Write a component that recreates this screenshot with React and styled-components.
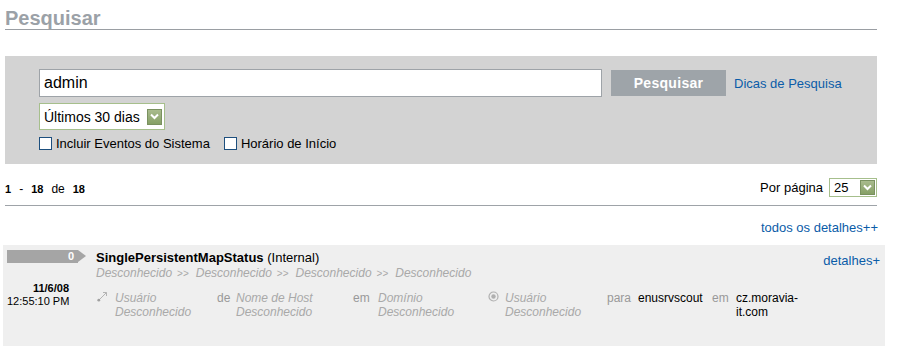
import React from "react";
import styled, { createGlobalStyle } from "styled-components";

const Global = createGlobalStyle`
  html, body { margin: 0; padding: 0; background: #fff; }
  body { font-family: "Liberation Sans", Arial, sans-serif; color: #000; }
  * { box-sizing: border-box; }
`;

const Page = styled.div`
  width: 897px;
  padding-left: 3px;
  padding-top: 8px;
`;

const Section = styled.div`
  width: 872px;
  margin-left: 2px;
`;

const Title = styled.h1`
  margin: 0;
  font-size: 20px;
  line-height: 20px;
  font-weight: bold;
  color: #9ba1a7;
  padding-bottom: 1px;
  border-bottom: 1px solid #9a9ea3;
`;

const Panel = styled.div`
  margin-top: 26px;
  background: #d3d3d3;
  padding: 13px 0 14px 34px;
  display: flex;
  flex-direction: column;
`;

const SearchRow = styled.div`
  display: flex;
  align-items: center;
`;

const SearchInput = styled.input`
  width: 563px;
  height: 28px;
  border: 1px solid #9ea3a8;
  background: #fff;
  padding: 0 4px;
  font-family: inherit;
  font-size: 16px;
  color: #000;
  outline: none;
`;

const SearchButton = styled.button`
  margin-left: 9px;
  width: 115px;
  height: 26px;
  border: none;
  background: #9ea4a9;
  color: #fff;
  font-family: inherit;
  font-weight: bold;
  font-size: 14px;
  letter-spacing: 0.3px;
  padding: 0;
`;

const Link = styled.a`
  color: #0a5ca8;
  font-size: 13px;
  line-height: 15px;
  text-decoration: none;
  margin-left: ${(p) => p.$ml || 0}px;
`;

const SelectBox = styled.div`
  display: flex;
  align-items: center;
  justify-content: space-between;
  width: ${(p) => p.$w}px;
  height: ${(p) => p.$h}px;
  background: #fff;
  border: 1px solid #a6bf8c;
  padding: 0 ${(p) => p.$pr}px 0 ${(p) => p.$pl}px;
  font-size: ${(p) => p.$fs}px;
`;

const DropButton = styled.span`
  display: inline-flex;
  align-items: center;
  justify-content: center;
  width: 15px;
  height: ${(p) => p.$h}px;
  background: linear-gradient(#a9bb8d, #86a066);
  border: 1px solid #7a9160;
`;

const Chevron = () => (
  <svg width="9" height="7" viewBox="0 0 9 7">
    <path d="M1 1.5 L4.5 5 L8 1.5" fill="none" stroke="#fff" strokeWidth="2" />
  </svg>
);

const Select = ({ value, w, h, fs, pl, pr, bh }) => (
  <SelectBox $w={w} $h={h} $fs={fs} $pl={pl} $pr={pr}>
    <span>{value}</span>
    <DropButton $h={bh}>
      <Chevron />
    </DropButton>
  </SelectBox>
);

const SelectRow = styled.div`
  margin-top: 6px;
`;

const CheckRow = styled.div`
  margin-top: 7px;
  display: flex;
  align-items: center;
  gap: 14px;
  font-size: 13px;
  line-height: 13px;
`;

const CheckLabel = styled.label`
  display: flex;
  align-items: center;
  gap: 4px;
`;

const CheckBox = styled.input.attrs({ type: "checkbox" })`
  appearance: none;
  margin: 0;
  width: 13px;
  height: 13px;
  border: 1px solid #1d4f7e;
  background: #fff;
`;

const ResultsBar = styled.div`
  margin-top: 14px;
  padding-bottom: 8px;
  border-bottom: 1px solid #9ea3a8;
  display: flex;
  align-items: center;
  justify-content: space-between;
`;

const Count = styled.div`
  display: flex;
  align-items: baseline;
  gap: 8px;
  font-size: 12px;
  padding-top: 3px;
`;

const Num = styled.b`
  font-size: 11px;
`;

const PerPage = styled.div`
  display: flex;
  align-items: center;
  gap: 6px;
  font-size: 13px;
`;

const AllDetails = styled.div`
  margin-top: 14px;
  text-align: right;
  margin-right: -1px;
  font-size: 13px;
  line-height: 15px;
  height: 15px;
`;

const EventRow = styled.div`
  margin-top: 10px;
  width: 882px;
  height: 101px;
  background: #efefef;
  padding: 5px 5px 0 4px;
  display: grid;
  grid-template-columns: 89px 1fr auto;
`;

const LeftCol = styled.div`
  display: flex;
  flex-direction: column;
`;

const Badge = styled.div`
  position: relative;
  width: 71px;
  height: 13px;
  background: #a5a5a5;
  color: #fff;
  font-weight: bold;
  font-size: 11px;
  line-height: 13px;
  text-align: right;
  padding-right: 4px;
  &::after {
    content: "";
    position: absolute;
    right: -8px;
    top: 0;
    border-left: 8px solid #a5a5a5;
    border-top: 6.5px solid transparent;
    border-bottom: 6.5px solid transparent;
  }
`;

const DateBlock = styled.div`
  margin-top: 19px;
  width: 62px;
  text-align: right;
  font-size: 11px;
  line-height: 13px;
  white-space: nowrap;
`;

const MainCol = styled.div`
  display: flex;
  flex-direction: column;
`;

const EventTitle = styled.div`
  font-size: 13px;
  line-height: 15px;
  b { font-weight: bold; }
`;

const Crumbs = styled.div`
  margin-top: 1px;
  font-size: 12px;
  line-height: 14px;
  font-style: italic;
  color: #a9a9a9;
`;

const Sep = styled.span`
  font-style: normal;
  font-size: 10px;
  margin: 0 7px 0 5px;
`;

const Details = styled.div`
  margin-top: 10px;
  display: grid;
  grid-template-columns: 19px 102px 19px 117px 25px 110px 17px 102px 31px 74px 24px 64px;
  font-size: 12px;
  line-height: 14px;
`;

const Unknown = styled.div`
  font-style: italic;
  color: #a9a9a9;
`;

const Conn = styled.div`
  color: #999;
`;

const Value = styled.div`
  color: #000;
`;

const IconCell = styled.div`
  padding-top: ${(p) => p.$pt}px;
  padding-left: ${(p) => p.$pl}px;
`;

const RightCol = styled.div`
  padding-top: 1px;
`;

const ArrowIcon = () => (
  <svg width="11" height="11" viewBox="0 0 11 11">
    <path d="M2 9 L9.5 1.5" stroke="#b4b4b4" strokeWidth="1" fill="none" />
    <path d="M6 1.5 H9.5 V5" stroke="#b4b4b4" strokeWidth="1" fill="none" />
    <circle cx="1.8" cy="9.2" r="1.4" fill="#a0a0a0" />
  </svg>
);

const RadioIcon = () => (
  <svg width="11" height="11" viewBox="0 0 11 11">
    <circle cx="5.5" cy="5.5" r="4.5" fill="none" stroke="#b0b0b0" strokeWidth="1.2" />
    <circle cx="5.5" cy="5.5" r="2.2" fill="#b0b0b0" />
  </svg>
);

export default function App() {
  return (
    <>
      <Global />
      <Page>
        <Section>
          <Title>Pesquisar</Title>
          <Panel>
            <SearchRow>
              <SearchInput defaultValue="admin" />
              <SearchButton>Pesquisar</SearchButton>
              <Link href="#" $ml={8}>Dicas de Pesquisa</Link>
            </SearchRow>
            <SelectRow>
              <Select value="Últimos 30 dias" w={126} h={27} fs={14} pl={4} pr={2} bh={16} />
            </SelectRow>
            <CheckRow>
              <CheckLabel>
                <CheckBox />
                Incluir Eventos do Sistema
              </CheckLabel>
              <CheckLabel>
                <CheckBox />
                Horário de Início
              </CheckLabel>
            </CheckRow>
          </Panel>
          <ResultsBar>
            <Count>
              <Num>1</Num>
              <span>-</span>
              <Num>18</Num>
              <span>de</span>
              <Num>18</Num>
            </Count>
            <PerPage>
              Por página
              <Select value="25" w={48} h={19} fs={13} pl={4} pr={1} bh={15} />
            </PerPage>
          </ResultsBar>
          <AllDetails>
            <Link href="#">todos os detalhes++</Link>
          </AllDetails>
        </Section>
        <EventRow>
          <LeftCol>
            <Badge>0</Badge>
            <DateBlock>
              <b>11/6/08</b>
              <br />
              12:55:10 PM
            </DateBlock>
          </LeftCol>
          <MainCol>
            <EventTitle>
              <b>SinglePersistentMapStatus</b> (Internal)
            </EventTitle>
            <Crumbs>
              Desconhecido<Sep>&gt;&gt;</Sep>Desconhecido<Sep>&gt;&gt;</Sep>Desconhecido<Sep>&gt;&gt;</Sep>Desconhecido
            </Crumbs>
            <Details>
              <IconCell $pt={0} $pl={1}><ArrowIcon /></IconCell>
              <Unknown>Usuário<br />Desconhecido</Unknown>
              <Conn>de</Conn>
              <Unknown>Nome de Host<br />Desconhecido</Unknown>
              <Conn>em</Conn>
              <Unknown>Domínio<br />Desconhecido</Unknown>
              <IconCell $pt={0} $pl={0}><RadioIcon /></IconCell>
              <Unknown>Usuário<br />Desconhecido</Unknown>
              <Conn>para</Conn>
              <Value>enusrvscout</Value>
              <Conn>em</Conn>
              <Value>cz.moravia-it.com</Value>
            </Details>
          </MainCol>
          <RightCol>
            <Link href="#">detalhes+</Link>
          </RightCol>
        </EventRow>
      </Page>
    </>
  );
}
